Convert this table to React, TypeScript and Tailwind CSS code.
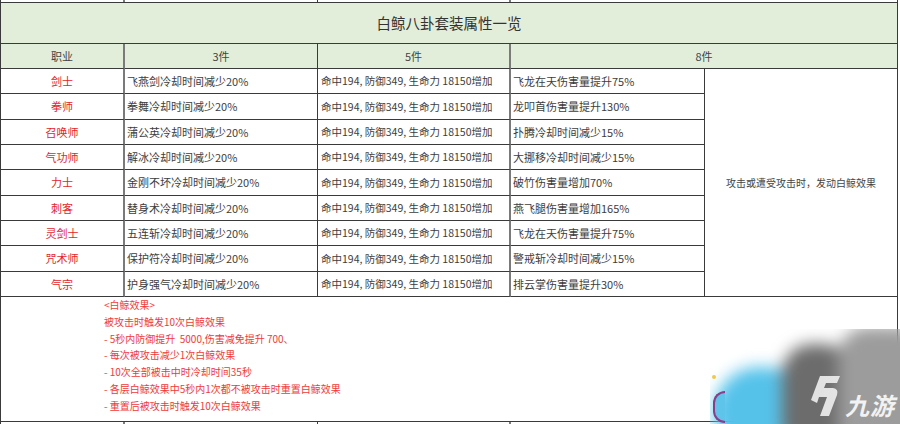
import React from "react";

const rows = [
  { job: "剑士", three: "飞燕剑冷却时间减少20%", eight: "飞龙在天伤害量提升75%" },
  { job: "拳师", three: "拳舞冷却时间减少20%", eight: "龙叩首伤害量提升130%" },
  { job: "召唤师", three: "蒲公英冷却时间减少20%", eight: "扑腾冷却时间减少15%" },
  { job: "气功师", three: "解冰冷却时间减少20%", eight: "大挪移冷却时间减少15%" },
  { job: "力士", three: "金刚不坏冷却时间减少20%", eight: "破竹伤害量增加70%" },
  { job: "刺客", three: "替身术冷却时间减少20%", eight: "燕飞腿伤害量增加165%" },
  { job: "灵剑士", three: "五连斩冷却时间减少20%", eight: "飞龙在天伤害量提升75%" },
  { job: "咒术师", three: "保护符冷却时间减少20%", eight: "警戒斩冷却时间减少15%" },
  { job: "气宗", three: "护身强气冷却时间减少20%", eight: "排云掌伤害量提升30%" },
];

const five = "命中194, 防御349, 生命力 18150增加";

const notes = [
  "<白鲸效果>",
  "被攻击时触发10次白鲸效果",
  "- 5秒内防御提升  5000,伤害减免提升 700、",
  "- 每次被攻击减少1次白鲸效果",
  "- 10次全部被击中时冷却时间35秒",
  "- 各层白鲸效果中5秒内1次都不被攻击时重置白鲸效果",
  "- 重置后被攻击时触发10次白鲸效果",
];

const line = "border-[#3a3a3a]";
const thick = "border-r-2 border-r-[#7a7a7a]";

function Watermark() {
  return (
    <div className="absolute right-0 bottom-0 w-[190px] h-[95px] overflow-hidden pointer-events-none">
      <div className="absolute -inset-[20px] blur-[8px]">
        <div className="absolute left-[24px] top-[58px] w-[95px] h-[90px] rounded-full bg-[#55c2ea]" />
        <div className="absolute left-[92px] top-[35px] w-[70px] h-[110px] rounded-[30px] bg-[#6c6c6c]" />
        <div className="absolute left-[148px] top-[18px] w-[90px] h-[130px] rounded-[30px] bg-[#9c9c9c]" />
      </div>
      <div className="absolute left-[3px] top-[62px] w-[12px] h-[32px] rounded-l-full bg-[#5fc4ea] border-2 border-r-0 border-[#8a3d8a]" />
      <div className="absolute left-[2px] top-[46px] w-[4px] h-[4px] rounded-full bg-[#f3c84a]" />
      <div className="absolute left-[98px] top-[44px] flex items-end gap-[3px]">
        <svg width="34" height="46" viewBox="0 0 34 46">
          <path
            d="M12 3 L32 3 L29 10 L18 10 L16 15 L25 15 Q31 16 29 22 L21 43 L12 43 L19 24 L11 24 L9 30 L3 27 Z"
            fill="#ededed"
            opacity="0.92"
          />
        </svg>
        <span className="text-[24px] leading-none font-bold italic text-[#f2f2f2] tracking-[1px] pb-[2px] [font-family:'Noto_Sans_CJK_SC',sans-serif]">
          九游
        </span>
      </div>
    </div>
  );
}

export default function App() {
  return (
    <div className="relative w-[900px] h-[424px] bg-white overflow-hidden text-[11px] text-[#3d3d3d] [font-family:'Noto_Sans_CJK_SC','Noto_Sans',sans-serif]">
      <div className="grid w-[898px] grid-cols-[125px_193px_193px_194px_193px] grid-rows-[2px_42px_25px_repeat(9,25.33px)_125px_2px]">
        {/* top strip */}
        <div className={`border-l ${line} ${thick}`} />
        <div className={`border-r ${line}`} />
        <div className={`${thick}`} />
        <div />
        <div className={`border-r ${line}`} />

        {/* title */}
        <div className={`col-span-5 flex items-center justify-center bg-[#e2eed9] border-t border-b border-l border-r ${line} text-[14.5px] text-[#333]`}>
          白鲸八卦套装属性一览
        </div>

        {/* header */}
        <div className={`flex items-center justify-center bg-[#e2eed9] border-l border-b ${line} ${thick} text-[#444]`}>
          职业
        </div>
        <div className={`flex items-center justify-center bg-[#e2eed9] border-r border-b ${line} text-[#444]`}>
          3件
        </div>
        <div className={`flex items-center justify-center bg-[#e2eed9] border-b ${line} ${thick} text-[#444]`}>
          5件
        </div>
        <div className={`col-span-2 flex items-center justify-center bg-[#e2eed9] border-r border-b ${line} text-[#444]`}>
          8件
        </div>

        {/* data rows */}
        {rows.map((r, i) => (
          <React.Fragment key={i}>
            <div className={`flex items-center justify-center border-l border-b ${line} ${thick} text-[#e2262c]`}>
              {r.job}
            </div>
            <div className={`flex items-center pl-[2px] border-r border-b ${line} whitespace-nowrap`}>
              {r.three}
            </div>
            <div className={`flex items-center pl-[3px] border-b ${line} ${thick} whitespace-pre text-[10.5px]`}>
              {five}
            </div>
            <div className={`flex items-center pl-[2px] border-r border-b ${line} whitespace-nowrap`}>
              {r.eight}
            </div>
            {i === 0 && (
              <div className={`row-span-9 flex items-center justify-center border-r border-b ${line} text-[10px] text-[#444]`}>
                攻击或遭受攻击时，发动白鲸效果
              </div>
            )}
          </React.Fragment>
        ))}

        {/* notes */}
        <div className={`col-span-5 flex flex-col pl-[103px] pt-[0px] border-l border-r border-b ${line} text-[10px] text-[#ee3a3a] leading-[16.8px] whitespace-pre`}>
          {notes.map((n, i) => (
            <div key={i}>{n}</div>
          ))}
        </div>

        {/* bottom strip */}
        <div className={`border-l ${line} ${thick}`} />
        <div className={`border-r ${line}`} />
        <div className={`${thick}`} />
        <div />
        <div className={`border-r ${line}`} />
      </div>
      <Watermark />
    </div>
  );
}
